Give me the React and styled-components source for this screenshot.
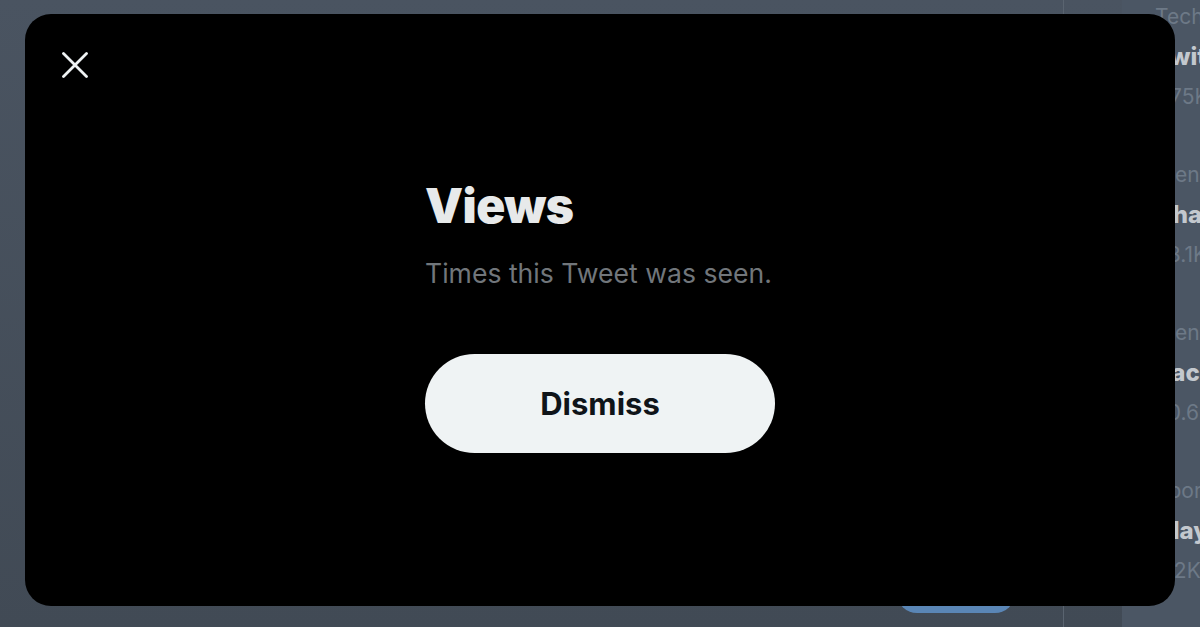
import React from "react";
import styled, { createGlobalStyle } from "styled-components";

const Global = createGlobalStyle`
  html, body { margin: 0; padding: 0; }
  body {
    width: 1200px;
    height: 627px;
    overflow: hidden;
    background: #434c57;
    font-family: Inter, "Noto Sans", "Liberation Sans", sans-serif;
  }
`;

const Page = styled.div`
  position: relative;
  width: 1200px;
  height: 627px;
  overflow: hidden;
  display: grid;
  grid-template-columns: 1064px 58px 1fr;
  background: linear-gradient(180deg, #4a5461 0%, #414a55 100%);
`;

const Timeline = styled.main`
  border-right: 1px solid #5a6470;
  display: flex;
  flex-direction: column;
  justify-content: flex-end;
  align-items: flex-end;
  padding: 0 48px 14px 0;
`;

const ReplyButton = styled.div`
  width: 118px;
  height: 40px;
  border-radius: 20px;
  background: #5a86b6;
`;

const Gap = styled.div``;

const Sidebar = styled.aside`
  background: #4b5664;
  padding-left: 33px;
  overflow: hidden;
`;

const TrendList = styled.div`
  margin-top: -22px;
  display: flex;
  flex-direction: column;
`;

const Trend = styled.div`
  padding: 19px 0;
  display: flex;
  flex-direction: column;
  white-space: nowrap;
`;

const TrendLine = styled.div`
  height: 40px;
  line-height: 40px;
  font-size: ${(p) => (p.$bold ? "24px" : "21px")};
  font-weight: ${(p) => (p.$bold ? 800 : 400)};
  color: ${(p) => (p.$bold ? "#c3c8ce" : "#6d7987")};
`;

const Overlay = styled.div`
  position: absolute;
  inset: 0;
  padding: 14px 25px 21px 25px;
  display: flex;
`;

const Modal = styled.div`
  flex: 1;
  background: #000;
  border-radius: 26px;
  display: flex;
  flex-direction: column;
`;

const Header = styled.div`
  padding: 27px 0 0 26px;
  display: flex;
`;

const CloseButton = styled.button`
  width: 48px;
  height: 48px;
  border: none;
  background: transparent;
  padding: 0;
  display: flex;
  align-items: center;
  justify-content: center;
  cursor: pointer;
`;

const Body = styled.div`
  padding-top: 89px;
  display: flex;
  flex-direction: column;
  align-items: center;
`;

const Content = styled.div`
  width: 350px;
  display: flex;
  flex-direction: column;
`;

const Title = styled.h1`
  margin: 0;
  font-size: 48px;
  line-height: 56px;
  font-weight: 900;
  color: #e7e9ea;
  letter-spacing: -0.6px;
`;

const Subtitle = styled.p`
  margin: 23px 0 0;
  font-size: 26.6px;
  line-height: 32px;
  font-weight: 400;
  color: #71767b;
  white-space: nowrap;
`;

const DismissButton = styled.button`
  margin-top: 65px;
  width: 350px;
  height: 99px;
  border: none;
  border-radius: 999px;
  background: #eff3f4;
  color: #0f1419;
  font-family: inherit;
  font-size: 31px;
  font-weight: 700;
  cursor: pointer;
`;

const trends = [
  ["Technology · Trending", "Twitter", "7.75K Tweets"],
  ["Trending in United States", "ChatGPT", "58.1K Tweets"],
  ["Trending in United States", "Zach Wilson", "50.6K Tweets"],
  ["Sports · Trending", "Klay Thompson", "2.2K Tweets"],
];

export default function App() {
  return (
    <>
      <Global />
      <Page>
        <Timeline>
          <ReplyButton />
        </Timeline>
        <Gap />
        <Sidebar>
          <TrendList>
            {trends.map(([cat, name, count]) => (
              <Trend key={name}>
                <TrendLine>{cat}</TrendLine>
                <TrendLine $bold>{name}</TrendLine>
                <TrendLine>{count}</TrendLine>
              </Trend>
            ))}
          </TrendList>
        </Sidebar>
        <Overlay>
          <Modal>
            <Header>
              <CloseButton aria-label="Close">
                <svg width="26" height="26" viewBox="0 0 26 26">
                  <path
                    d="M1.5 1.5 L24.5 24.5 M24.5 1.5 L1.5 24.5"
                    stroke="#eff3f4"
                    strokeWidth="2.8"
                    strokeLinecap="round"
                    fill="none"
                  />
                </svg>
              </CloseButton>
            </Header>
            <Body>
              <Content>
                <Title>Views</Title>
                <Subtitle>Times this Tweet was seen.</Subtitle>
                <DismissButton>Dismiss</DismissButton>
              </Content>
            </Body>
          </Modal>
        </Overlay>
      </Page>
    </>
  );
}
